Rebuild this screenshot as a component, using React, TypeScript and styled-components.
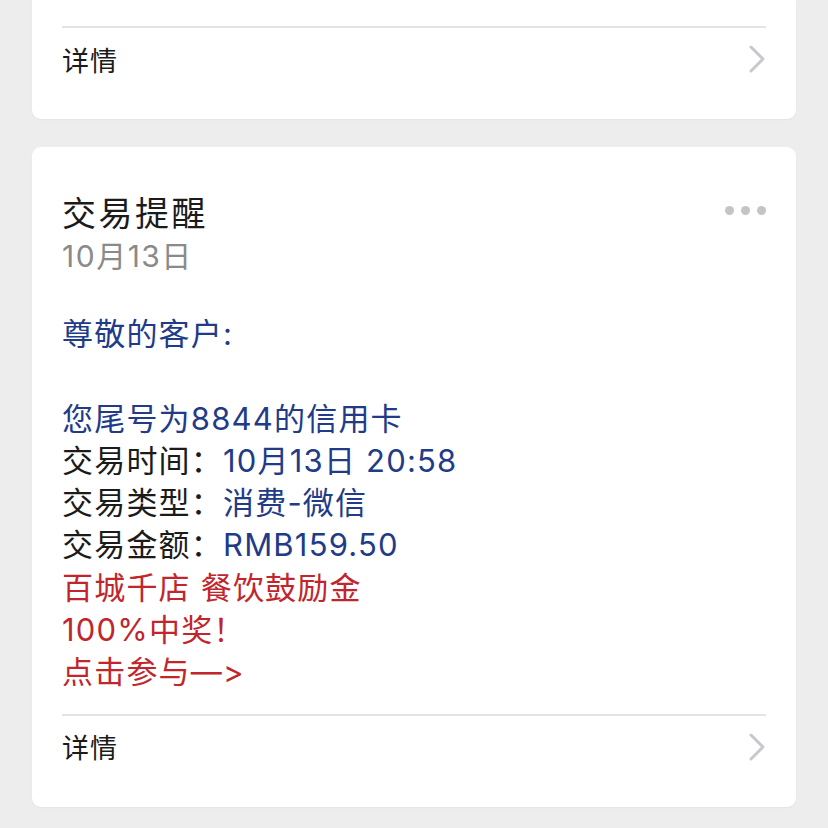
import styled, { createGlobalStyle } from 'styled-components';

const GlobalStyle = createGlobalStyle`
  html, body {
    margin: 0;
    padding: 0;
    background: #ededed;
  }

  body {
    font-family: 'Inter', 'Noto Sans CJK SC', sans-serif;
    -webkit-font-smoothing: antialiased;
  }
`;

const Page = styled.div`
  display: flex;
  flex-direction: column;
  gap: 28px;
  padding: 0 32px;
  min-height: 828px;
  box-sizing: border-box;
`;

const Card = styled.section<{ $cut?: boolean }>`
  background: #ffffff;
  border-radius: ${({ $cut }) => ($cut ? '0 0 9px 9px' : '9px')};
  padding: ${({ $cut }) => ($cut ? '26px' : '45px')} 30px 0;
  box-shadow: 0 1px 2px rgba(0, 0, 0, 0.04);
`;

const Header = styled.div`
  display: flex;
  justify-content: space-between;
  align-items: flex-start;
`;

const Title = styled.h2`
  margin: 0;
  font-size: 34px;
  font-weight: 400;
  line-height: 44px;
  color: #1b1b1b;
  letter-spacing: 2.5px;
`;

const DateLine = styled.div`
  font-size: 30px;
  line-height: 40px;
  color: #8a8a8a;
  letter-spacing: 1.5px;
`;

const More = styled.div`
  display: flex;
  gap: 7px;
  padding-top: 14px;
`;

const Dot = styled.span`
  width: 9px;
  height: 9px;
  border-radius: 50%;
  background: #c4c4c8;
`;

const Body = styled.div`
  margin-top: 37px;
  font-size: 31px;
  line-height: 42.3px;
  letter-spacing: 1.2px;
`;

const Line = styled.div<{ $tone?: 'blue' | 'red' | 'black' }>`
  min-height: 42.3px;
  color: ${({ $tone }) =>
    $tone === 'red' ? '#c0262c' : $tone === 'black' ? '#1b1b1b' : '#213b88'};
`;

const Label = styled.span`
  color: #1b1b1b;
`;

const Footer = styled.div<{ $top?: number }>`
  margin-top: ${({ $top }) => $top ?? 0}px;
  border-top: 2px solid #e4e4e4;
  padding-bottom: 29px;
`;

const DetailRow = styled.div`
  display: flex;
  align-items: center;
  justify-content: space-between;
  height: 62px;
  font-size: 27px;
  letter-spacing: 1px;
  color: #1b1b1b;
`;

function Chevron() {
  return (
    <svg width="18" height="28" viewBox="0 0 18 28" fill="none">
      <path
        d="M3 2 L15 14 L3 26"
        stroke="#c8c8cc"
        strokeWidth="3"
        strokeLinecap="round"
        strokeLinejoin="round"
      />
    </svg>
  );
}

function Detail({ top }: { top?: number }) {
  return (
    <Footer $top={top}>
      <DetailRow>
        <span>详情</span>
        <Chevron />
      </DetailRow>
    </Footer>
  );
}

function App() {
  return (
    <>
      <GlobalStyle />
      <Page>
        <Card $cut>
          <Detail />
        </Card>

        <Card>
          <Header>
            <div>
              <Title>交易提醒</Title>
              <DateLine>10月13日</DateLine>
            </div>
            <More>
              <Dot />
              <Dot />
              <Dot />
            </More>
          </Header>

          <Body>
            <Line>尊敬的客户:</Line>
            <Line />
            <Line>您尾号为8844的信用卡</Line>
            <Line>
              <Label>交易时间：</Label>10月13日 20:58
            </Line>
            <Line>
              <Label>交易类型：</Label>消费-微信
            </Line>
            <Line>
              <Label>交易金额：</Label>RMB159.50
            </Line>
            <Line $tone="red">百城千店 餐饮鼓励金</Line>
            <Line $tone="red">100%中奖！</Line>
            <Line $tone="red">点击参与—&gt;</Line>
          </Body>

          <Detail top={20} />
        </Card>
      </Page>
    </>
  );
}

export default App;
